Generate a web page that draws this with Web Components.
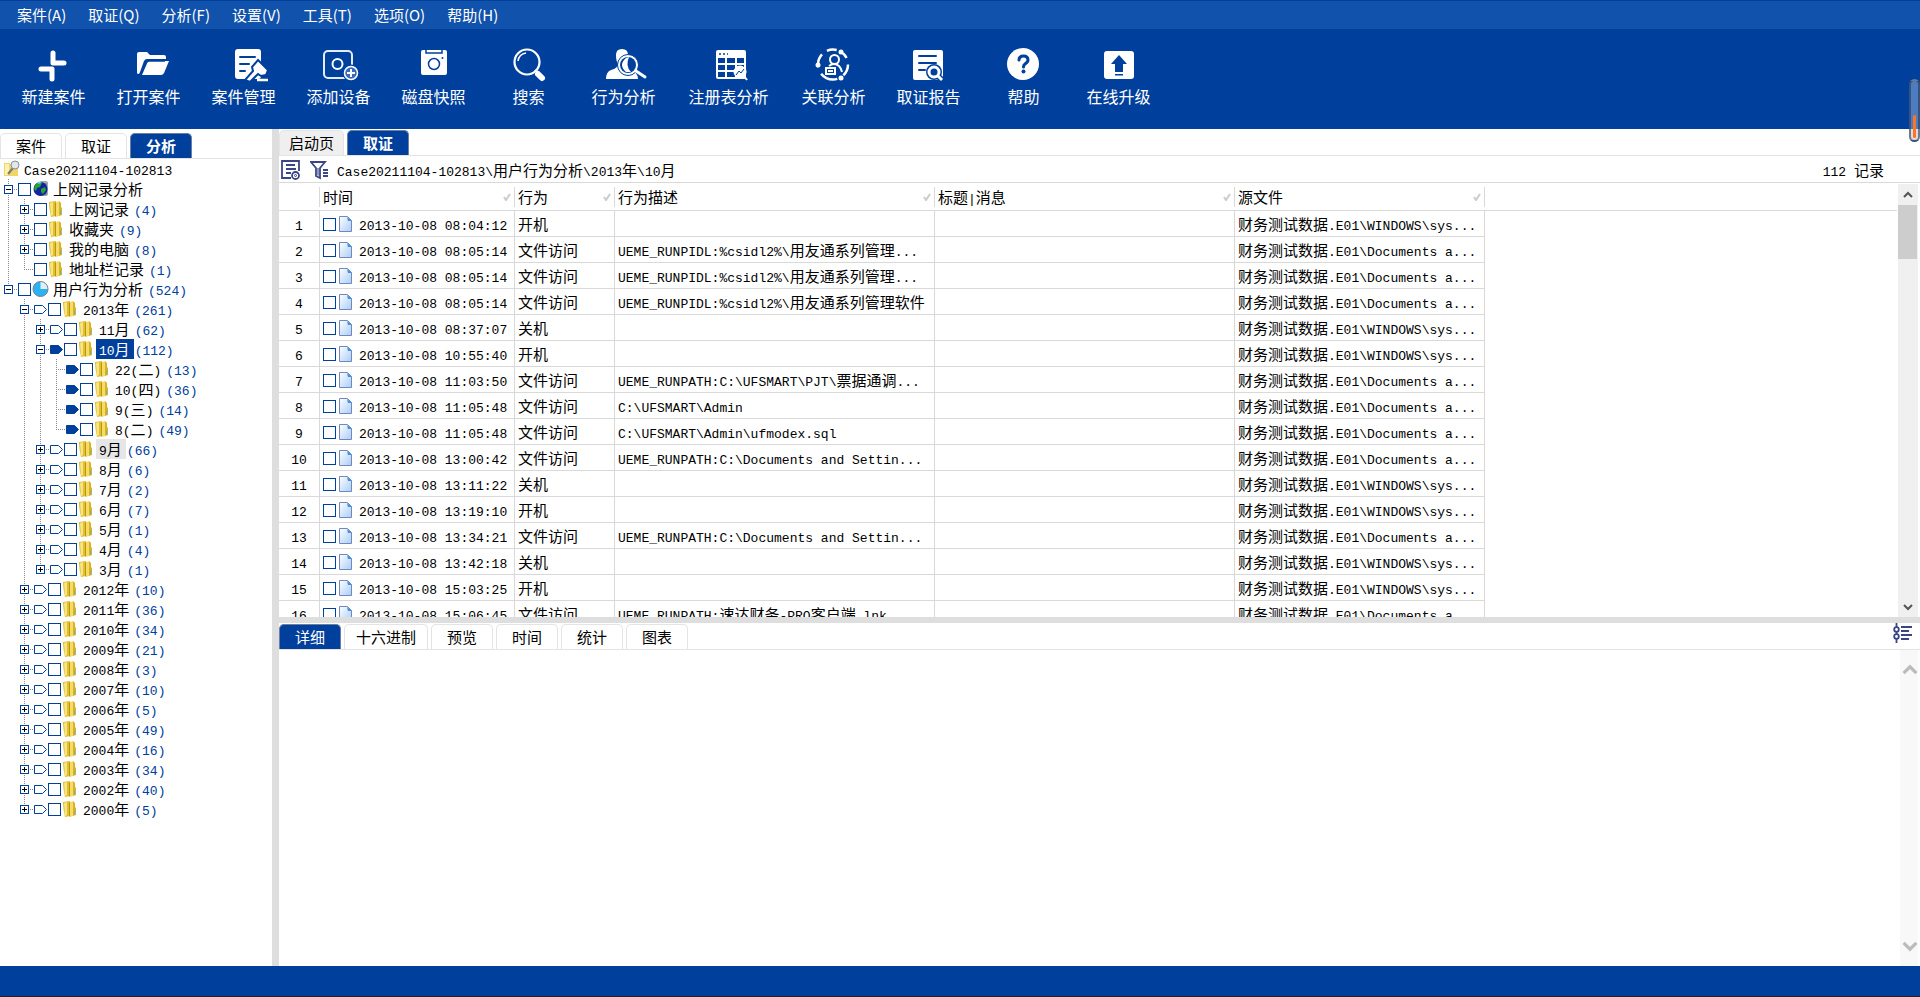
<!DOCTYPE html>
<html lang="zh-CN">
<head>
<meta charset="utf-8">
<title>取证分析</title>
<style>
html, body { margin: 0; height: 100%; }
body {
  --blue: #00409d;
  --line: #d9d9d9;
  --split: #dedede;
  --mono: "Liberation Mono", monospace;
  font: 15px/20px "Noto Sans CJK SC", sans-serif;
  color: #000;
  background: #fff;
  overflow: hidden;
}
</style>
</head>
<body>
<forensic-app></forensic-app>
<script>
const esc = s => s.replace(/&/g, '&amp;').replace(/</g, '&lt;');
const mix = s => s.replace(/[\x20-\x7e]+/g, m => `<span class="l">${esc(m)}</span>`);
const base = `<style>
  *{box-sizing:border-box}
  button{font:inherit;color:inherit;background:none;border:0;padding:0;margin:0}
  .l{font-family:var(--mono);font-size:13px;line-height:1;white-space:pre}
  input[type=checkbox]{appearance:none;width:13px;height:13px;margin:0;border:1px solid var(--blue);background:#fff;flex:none}
  svg{display:block;flex:none}
</style>`;
class Base extends HTMLElement {
  connectedCallback() {
    if (this.shadowRoot) return;
    this.attachShadow({ mode: 'open' }).innerHTML = base + this.render();
  }
}

customElements.define('menu-bar', class extends Base {
  render() {
    const items = ['案件(A)', '取证(Q)', '分析(F)', '设置(V)', '工具(T)', '选项(O)', '帮助(H)'];
    return `<style>
      :host{display:block;background:#1152ac;border-top:1px solid var(--blue);color:#fff}
      nav{display:flex;gap:22px;padding:0 17px;height:28px;align-items:center}
      button{line-height:28px}
    </style><nav>${items.map(t => `<button>${t}</button>`).join('')}</nav>`;
  }
});

const toolIcons = {
  add: `<g fill="none" stroke="#fff" stroke-width="5" stroke-linecap="round" stroke-linejoin="round"><path d="M21 7v10h11M9 23h11v10"/></g>`,
  open: `<path fill="#fff" d="M10 27V8q0-2 2-2h8l3 3h14q2 0 2 2v2H20q-2 0-3 2l-4 11-1 2q-2 0-2-1Z"/><path fill="#fff" d="M21 15h21l-5 12q-1 2-3 2H15Z"/><path fill="none" stroke="#00409d" stroke-width="1.5" d="M15 26l4-9q1-2 3-2h16"/>`,
  manage: `<rect x="13" y="3" width="26" height="30" rx="3" fill="#fff"/><path stroke="#00409d" stroke-width="2" stroke-linecap="round" d="M18 11h15M18 18h9M18 25h5"/><path fill="#fff" stroke="#00409d" stroke-width="2" d="M36 14l10 10-2 5-5 1-3-2-8 8-5-2 8-9-1-4Z"/><path stroke="#fff" stroke-width="2.5" d="M35 34h11"/>`,
  device: `<rect x="7" y="5" width="28" height="27" rx="4" fill="none" stroke="#e4ecf8" stroke-width="2"/><circle cx="20.500" cy="18" r="5" fill="none" stroke="#fff" stroke-width="2"/><circle cx="34" cy="27" r="8.500" fill="#00409d"/><circle cx="34" cy="27" r="6.500" fill="#3a6bb8" stroke="#fff" stroke-width="1.500"/><path stroke="#fff" stroke-width="2" d="M30 27h8M34 23v8"/>`,
  disk: `<rect x="9" y="4" width="26" height="25" rx="2" fill="#fff"/><path fill="none" stroke="#00409d" stroke-width="1.500" d="M14 4v3h16V4"/><circle cx="22" cy="18" r="5.500" fill="none" stroke="#00409d" stroke-width="1.500"/><circle cx="30.500" cy="12" r="1" fill="#00409d"/>`,
  search: `<circle cx="20" cy="16" r="12.500" fill="none" stroke="#fff" stroke-width="2.200"/><path fill="none" stroke="#fff" stroke-width="1.500" d="M11 15q1-7 8-8"/><path stroke="#fff" stroke-width="2" d="M28 24l3 3"/><path stroke="#fff" stroke-width="6" stroke-linecap="round" d="M31 28l4 4"/>`,
  behavior: `<path fill="#fff" d="M14 9q0-6 6-6t6 6-3 9q0 3 4 5 9 3 9 10H4q0-7 5-9 7-2 7-6-2-3-2-9Z"/><circle cx="26" cy="19" r="10.500" fill="#fff" stroke="#00409d"/><circle cx="26" cy="19" r="8" fill="#00409d"/><path fill="#fff" d="M24 12q-8 7 0 14h5q-6-6-2-15Z"/><path stroke="#fff" stroke-width="3" stroke-linecap="round" d="M34 25l9 6"/>`,
  registry: `<rect x="9" y="4" width="30" height="29" rx="2" fill="#fff"/><path stroke="#00409d" stroke-width="1.500" stroke-dasharray="2 2" d="M12 8h9"/><path fill="#00409d" d="M11 12h7v5h-7zM20 12h8v5h-8zM30 12h7v5h-7zM11 19h7v5h-7zM20 19h8v5h-8zM30 19h7v5h-7zM11 26h7v5h-7zM20 26h8v5h-8z"/><circle cx="33" cy="26" r="6.500" fill="#fff"/><path stroke="#fff" stroke-width="2" d="M37 30l3 4"/><path fill="none" stroke="#00409d" d="M29 29l3-4 2 2 3-4"/>`,
  relate: `<circle cx="21" cy="18.500" r="15" fill="none" stroke="#fff" stroke-width="2.500" stroke-dasharray="12 7 18 7 14 6 10 7 6 8"/><g fill="#fff"><circle cx="29" cy="6" r="2.500"/><circle cx="6" cy="19" r="2.500"/><circle cx="29" cy="32" r="2.500"/></g><g fill="none" stroke="#fff" stroke-width="2"><circle cx="22.500" cy="13.500" r="4.500"/><path d="M17 20q5-4 10 0 2 2 3 6M14 22h9v6h-9zM16 25h5"/></g>`,
  report: `<rect x="6" y="4" width="30" height="30" rx="2" fill="#fff"/><path stroke="#00409d" stroke-width="2" stroke-linecap="round" d="M12 10h17M12 17h17M12 24h6"/><circle cx="27" cy="26" r="8" fill="#00409d"/><path stroke="#00409d" stroke-width="6" d="M31 30l5 5"/><circle cx="27" cy="26" r="5" fill="none" stroke="#fff" stroke-width="3"/><path stroke="#fff" stroke-width="3" d="M31 30l4 4"/>`,
  help: `<circle cx="21" cy="18" r="16" fill="#fff"/><path fill="none" stroke="#00409d" stroke-width="3" stroke-linecap="round" d="M17 14q0-4 4.500-4t4.500 4q0 2-3 4-1.500 1-1.500 3"/><circle cx="21.500" cy="25.500" r="2" fill="#00409d"/>`,
  upgrade: `<rect x="7" y="5" width="30" height="28" rx="3" fill="#fff"/><path fill="#00409d" d="M22 9l8 9h-4v8h-8v-8h-4zM18 28h8v1.500h-8z"/>`
};
customElements.define('tool-button', class extends Base {
  render() {
    return `<style>
      :host{display:block;flex:0 0 95px}
      :host([wide]){flex-basis:115px}
      button{display:flex;flex-direction:column;align-items:center;width:100%;font-size:16px;line-height:24px;color:#fff;white-space:nowrap;gap:2px}
      svg{overflow:visible}
    </style><button><svg width="44" height="36" aria-hidden="true">${toolIcons[this.getAttribute('icon')]}</svg><slot></slot></button>`;
  }
});

customElements.define('tool-bar', class extends Base {
  render() {
    return `<style>
      :host{display:flex;height:100px;padding:17px 6px 0;background:var(--blue);flex:none}
    </style><slot></slot>`;
  }
});

/* Tab strip: labels are comma separated, `active` is the index of the current tab. */
customElements.define('tab-strip', class extends Base {
  render() {
    const active = +this.getAttribute('active');
    return `<style>
      :host{display:flex;gap:3px;align-items:flex-end;border-bottom:1px solid #e4e4e4;height:var(--tabs-h,27px);flex:none}
      button{min-width:62px;height:25px;padding:0 11px;border:1px solid #e4e4e4;border-bottom:0;border-radius:5px 5px 0 0;background:#fff;line-height:24px}
      :host([variant=page]) button{background:#efefef;padding:0 9px}
      button.on,:host([variant=page]) button.on{background:var(--blue);border-color:#6b7fa5;color:#fff;font-weight:700}
      :host([variant=detail]) button.on{font-weight:400}
    </style>${this.getAttribute('labels').split(',').map((t, i) => `<button class="${i === active ? 'on' : ''}">${t}</button>`).join('')}`;
  }
});

const folderSvg = `<svg width="16" height="18" viewBox="0 0 16 18"><path fill="#e2bf2b" d="M1 2l7-1v15l-5 1q-2-8-2-15Z"/><path fill="#f6e488" d="M2 3l3-1v13l-2 1Z"/><path fill="#b9960f" d="M7 3l1-1v14l-1 1Z"/><path fill="#f3dc6c" d="M8 2l3-1v15l-3 1Z"/><path fill="#d9b420" d="M11 1l2 2v4l1 1v7l-3 1Z"/><path fill="#4fb4e6" d="M12 11h1v3h-1z"/></svg>`;
const treeIcons = {
  folder: folderSvg,
  web: `<svg width="17" height="18" viewBox="0 0 17 18"><rect x="7" y="1" width="9" height="15" rx="2" fill="#a5a8b4"/><path stroke="#6c7080" d="M9 4h6M9 14h6"/><circle cx="8.500" cy="9" r="7" fill="#10259e"/><path fill="#27a52e" d="M3 5q4-4 7-2l-2 4-3 1-1 3-2-2zM9 9l4-2 1 3-3 4-2-2z"/><path fill="#7ec8ff" d="M5 3q3-2 5-1l-3 2z"/></svg>`,
  pie: `<svg width="17" height="18" viewBox="0 0 17 18"><circle cx="8.500" cy="9" r="7.500" fill="#28b4f4" stroke="#7a7f86"/><path fill="#e4eef2" d="M8.500 9V2a7 7 0 0 1 7 7Z"/></svg>`
};
/* [depth, label, count, expander ('+', '-' or ''), icon, tag ('o' outline, 'f' filled), state] */
const tree = [
  [0, '上网记录分析', 0, '-', 'web'],
  [1, '上网记录', 4, '+', 'folder'], [1, '收藏夹', 9, '+', 'folder'],
  [1, '我的电脑', 8, '+', 'folder'], [1, '地址栏记录', 1, '', 'folder'],
  [0, '用户行为分析', 524, '-', 'pie'],
  [1, '2013年', 261, '-', 'folder', 'o'],
  [2, '11月', 62, '+', 'folder', 'o'],
  [2, '10月', 112, '-', 'folder', 'f', 'sel'],
  [3, '22(二)', 13, '', 'folder', 'f'], [3, '10(四)', 36, '', 'folder', 'f'],
  [3, '9(三)', 14, '', 'folder', 'f'], [3, '8(二)', 49, '', 'folder', 'f'],
  [2, '9月', 66, '+', 'folder', 'o', 'hot'],
  ...[['8月', 6], ['7月', 2], ['6月', 7], ['5月', 1], ['4月', 4], ['3月', 1]].map(([t, n]) => [2, t, n, '+', 'folder', 'o']),
  ...[[2012, 10], [2011, 36], [2010, 34], [2009, 21], [2008, 3], [2007, 10], [2006, 5], [2005, 49], [2004, 16], [2003, 34], [2002, 40], [2000, 5]].map(([y, n]) => [1, y + '年', n, '+', 'folder', 'o'])
];
const hasNext = (i, d) => {
  for (let j = i + 1; j < tree.length; j++) {
    if (tree[j][0] < d) return false;
    if (tree[j][0] === d) return true;
  }
  return false;
};
customElements.define('case-tree', class extends Base {
  row([d, label, n, ex, icon, tag, state], i) {
    let guides = '';
    for (let k = 0; k < d; k++) guides += `<i class="g ${hasNext(i, k) ? 'v' : ''}"></i>`;
    const box = ex ? `<button class="ex" aria-label="${ex === '+' ? '展开' : '折叠'}"><svg width="9" height="9"><path stroke="#000" d="M2 4.500h5${ex === '+' ? 'M4.500 2v5' : ''}"/></svg></button>` : '';
    const mark = tag ? `<svg class="tag" width="14" height="9"><path stroke="#00409d" fill="${tag === 'f' ? '#00409d' : '#fff'}" d="M.5 .5h8l4 4-4 4h-8z"/></svg>` : '';
    return `<li>${guides}<span class="own ${hasNext(i, d) ? 'v' : 'end'}">${box}</span>${mark}<input type="checkbox" aria-label="${label}"><span class="ic">${treeIcons[icon]}</span><span class="t ${state || ''}">${mix(label)}</span>${n ? `<span class="n">${mix('(' + n + ')')}</span>` : ''}</li>`;
  }
  render() {
    return `<style>
      :host{display:block;flex:1;min-height:0;overflow:hidden}
      ul{list-style:none;margin:0;padding:0}
      li{display:flex;align-items:center;height:20px;white-space:nowrap;
         --dv:repeating-linear-gradient(#888 0 1px,transparent 1px 2px);
         --dh:repeating-linear-gradient(90deg,#888 0 1px,transparent 1px 2px)}
      .root{padding-left:3px;gap:3px}
      .g{flex:none;width:16px;height:20px}
      .g.v{background:var(--dv) 8px 0/1px 20px no-repeat}
      .own{flex:none;width:18px;height:20px;padding:6px 0 0 4px}
      .own.v{background:var(--dv) 8px 0/1px 20px no-repeat,var(--dh) 8px 10px/9px 1px no-repeat}
      .own.end{background:var(--dv) 8px 0/1px 10px no-repeat,var(--dh) 8px 10px/9px 1px no-repeat}
      .ex{display:block;width:9px;height:9px;background:#fff;outline:1px solid var(--blue);outline-offset:-1px}
      .ic{flex:none;width:18px;margin-left:1px}
      .t{height:20px;line-height:20px;padding:0 4px 0 3px}
      .sel{background:var(--blue);color:#fff}
      .hot{background:#e6e6e6}
      .n{color:var(--blue);margin-left:1px}
    </style><ul><li class="root"><svg width="18" height="18" viewBox="0 0 18 18"><path fill="#f0d56a" d="M1 3h6l1 2h7v11H1Z"/><path fill="#fff2b0" d="M2 4h4v11H2Z"/><path stroke="#777" stroke-width="2" d="M10 8l-5 6"/><circle cx="12" cy="5" r="4" fill="#dfe8ee" stroke="#85909a"/></svg><span>${mix('Case20211104-102813')}</span></li>${tree.map((r, i) => this.row(r, i)).join('')}</ul>`;
  }
});

customElements.define('path-bar', class extends Base {
  render() {
    return `<style>
      :host{display:flex;align-items:center;height:27px;padding:2px 36px 0 2px;border-bottom:1px solid var(--line);flex:none}
      button+button{margin-left:9px}
      .p{margin-left:8px;flex:1}
    </style>
    <button aria-label="视图设置"><svg width="20" height="20" fill="none" stroke="#3a4585" stroke-width="1.800"><path d="M18 11V1H1v17h9M5 5h9M5 9h10M5 13h5"/><circle cx="14.500" cy="15.500" r="3.500"/><circle cx="14.500" cy="15.500" r="1" stroke-width="1"/></svg></button>
    <button aria-label="筛选"><svg width="19" height="20" fill="none" stroke="#3a4585" stroke-width="1.800"><path d="M1 2h14L10 8v10l-4-2V8Z"/><path fill="#8f97bd" stroke="none" d="M7 8h2v8l-2-1z"/><path d="M13 10h5M13 13h5M13 16h5"/></svg></button>
    <span class="p">${mix('Case20211104-102813\\用户行为分析\\2013年\\10月')}</span><span>${mix('112 记录')}</span>`;
  }
});

customElements.define('scroll-bar', class extends Base {
  render() {
    return `<style>
      :host{display:flex;flex-direction:column;justify-content:space-between;align-items:center;flex:none;width:20px;margin-right:2px;background:#f0f0f0;color:#555}
      :host([plain]){width:18px;background:#f8f8f8;color:#bbb}
      .top{width:100%}
      button{display:flex;justify-content:center;align-items:center;width:100%;height:21px}
      :host([plain]) button{height:40px;padding-left:2px}
      .thumb{height:54px;margin-right:1px;background:#cdcdcd}
      :host([plain]) .thumb{display:none}
      svg{overflow:visible;fill:none;stroke:currentColor;stroke-width:2}
      :host([plain]) svg{width:16px;height:10px}
    </style>
    <div class="top"><button aria-label="向上滚动"><svg width="10" height="6" viewBox="0 0 10 6"><path d="M1 5l4-4 4 4"/></svg></button><div class="thumb"></div></div>
    <button aria-label="向下滚动"><svg width="10" height="6" viewBox="0 0 10 6"><path d="M1 1l4 4 4-4"/></svg></button>`;
  }
});

const DOC = '财务测试数据.E01\\Documents a...', SYS = '财务测试数据.E01\\WINDOWS\\sys...';
const rows = [
  ['08:04:12', '开机', ''],
  ['08:05:14', '文件访问', 'UEME_RUNPIDL:%csidl2%\\用友通系列管理...'],
  ['08:05:14', '文件访问', 'UEME_RUNPIDL:%csidl2%\\用友通系列管理...'],
  ['08:05:14', '文件访问', 'UEME_RUNPIDL:%csidl2%\\用友通系列管理软件'],
  ['08:37:07', '关机', ''],
  ['10:55:40', '开机', ''],
  ['11:03:50', '文件访问', 'UEME_RUNPATH:C:\\UFSMART\\PJT\\票据通调...'],
  ['11:05:48', '文件访问', 'C:\\UFSMART\\Admin'],
  ['11:05:48', '文件访问', 'C:\\UFSMART\\Admin\\ufmodex.sql'],
  ['13:00:42', '文件访问', 'UEME_RUNPATH:C:\\Documents and Settin...'],
  ['13:11:22', '关机', ''],
  ['13:19:10', '开机', ''],
  ['13:34:21', '文件访问', 'UEME_RUNPATH:C:\\Documents and Settin...'],
  ['13:42:18', '关机', ''],
  ['15:03:25', '开机', ''],
  ['15:06:45', '文件访问', 'UEME_RUNPATH:速达财务-PRO客户端.lnk']
];
customElements.define('record-table', class extends Base {
  render() {
    const tick = `<svg width="8" height="8"><path fill="none" stroke="#ccc" stroke-width="2" d="M1 4l2 3 4-6"/></svg>`;
    const heads = ['时间', '行为', '行为描述', '标题|消息', '源文件'];
    const doc = `<svg width="14" height="17"><defs><linearGradient id="g" x2="1" y2="1"><stop offset="0" stop-color="#fff"/><stop offset="1" stop-color="#a9cdf8"/></linearGradient></defs><path fill="url(#g)" stroke="#7288bd" d="M.5 .5h8l4 4v11H.5z"/><path fill="#3e8ee0" d="M8 1l5 4H9z"/></svg>`;
    return `<style>
      :host{display:flex;flex:1;min-height:0;overflow:hidden}
      .view{flex:1;min-width:0;overflow:hidden;margin-right:1px}
      scroll-bar{margin-top:1px}
      table{border-collapse:separate;border-spacing:0;table-layout:fixed;width:100%}
      th,td{text-align:left;font-weight:400;white-space:nowrap;overflow:hidden;padding:0;border-bottom:1px solid var(--line)}
      th{height:28px}
      th div{display:flex;justify-content:space-between;align-items:center;height:20px;padding:0 3px;border-right:1px solid var(--line)}
      th:last-child div{border:0}
      td{height:26px;padding:1px 0 0 3px;line-height:22px;border-right:1px solid var(--line);vertical-align:middle}
      td:first-child{text-align:center;padding-left:0}
      .time{display:flex;align-items:center;height:22px}
      .time svg{margin:0 6px 0 3px}
    </style><div class="view"><table>
      <colgroup><col style="width:41px"><col style="width:195px"><col style="width:100px"><col style="width:320px"><col style="width:300px"><col style="width:250px"><col></colgroup>
      <thead><tr><th><div></div></th>${heads.map(h => `<th><div><span>${mix(h)}</span>${tick}</div></th>`).join('')}<th><div></div></th></tr></thead>
      <tbody>${rows.map(([t, a, d], i) => `<tr><td>${mix(String(i + 1))}</td><td><div class="time"><input type="checkbox" aria-label="记录 ${i + 1}">${doc}<span>${mix('2013-10-08 ' + t)}</span></div></td><td>${a}</td><td>${mix(d)}</td><td></td><td>${mix(a === '文件访问' ? DOC : SYS)}</td></tr>`).join('')}</tbody>
    </table></div><scroll-bar></scroll-bar>`;
  }
});

customElements.define('detail-pane', class extends Base {
  render() {
    return `<style>
      :host{display:flex;flex-direction:column;flex:343 1 0;min-height:0}
      header{display:flex;height:27px;flex:none}
      tab-strip{flex:1}
      .opt{height:27px;padding:0 8px 6px 0;border-bottom:1px solid #e4e4e4}
      .body{display:flex;justify-content:flex-end;flex:1}
    </style><header><tab-strip variant="detail" active="0" labels="详细,十六进制,预览,时间,统计,图表"></tab-strip><button class="opt" aria-label="显示选项"><svg width="19" height="20" fill="none" stroke="#3a4585" stroke-width="1.800"><path d="M3.500 0v4M3.500 9v2M3.500 16v4M8 4h11M8 8h8M8 12h11M8 16h8"/><circle cx="3.500" cy="6.500" r="2.300"/><circle cx="3.500" cy="13.500" r="2.300"/></svg></button></header>
    <div class="body"><scroll-bar plain></scroll-bar></div>`;
  }
});

customElements.define('forensic-app', class extends Base {
  render() {
    const tools = [['add', '新建案件'], ['open', '打开案件'], ['manage', '案件管理'], ['device', '添加设备'], ['disk', '磁盘快照'], ['search', '搜索'], ['behavior', '行为分析'], ['registry', '注册表分析'], ['relate', '关联分析'], ['report', '取证报告'], ['help', '帮助'], ['upgrade', '在线升级']];
    return `<style>
      :host{display:flex;flex-direction:column;height:100vh}
      main{display:flex;flex:1;min-height:0}
      aside{display:flex;flex-direction:column;width:279px;flex:none;border-right:7px solid var(--split)}
      aside tab-strip{--tabs-h:30px}
      .right{display:flex;flex-direction:column;flex:1;min-width:0}
      .top{display:flex;flex-direction:column;flex:488 1 0;min-height:0}
      hr{width:100%;height:6px;margin:0;border:0;background:var(--split);flex:none}
      footer{height:31px;flex:none;background:var(--blue);border-bottom:1px solid #222}
      .gauge{position:absolute;right:0;top:79px;width:11px;height:63px;padding:34px 2px 2px;border:2px solid rgba(40,55,80,.6);border-radius:6px;background:linear-gradient(#4e7cc0 48px,#ddd 48px)}
      .gauge i{display:block;height:23px;background:#ff7424;border-radius:2px}
    </style>
    <menu-bar></menu-bar>
    <tool-bar>${tools.map(([i, t]) => `<tool-button icon="${i}"${t.length > 4 ? ' wide' : ''}>${t}</tool-button>`).join('')}</tool-bar>
    <main>
      <aside><tab-strip active="2" labels="案件,取证,分析"></tab-strip><case-tree></case-tree></aside>
      <div class="right">
        <section class="top"><tab-strip variant="page" active="1" labels="启动页,取证"></tab-strip><path-bar></path-bar><record-table></record-table></section>
        <hr><detail-pane></detail-pane>
      </div>
    </main>
    <footer></footer><div class="gauge"><i></i></div>`;
  }
});
</script>
</body>
</html>
